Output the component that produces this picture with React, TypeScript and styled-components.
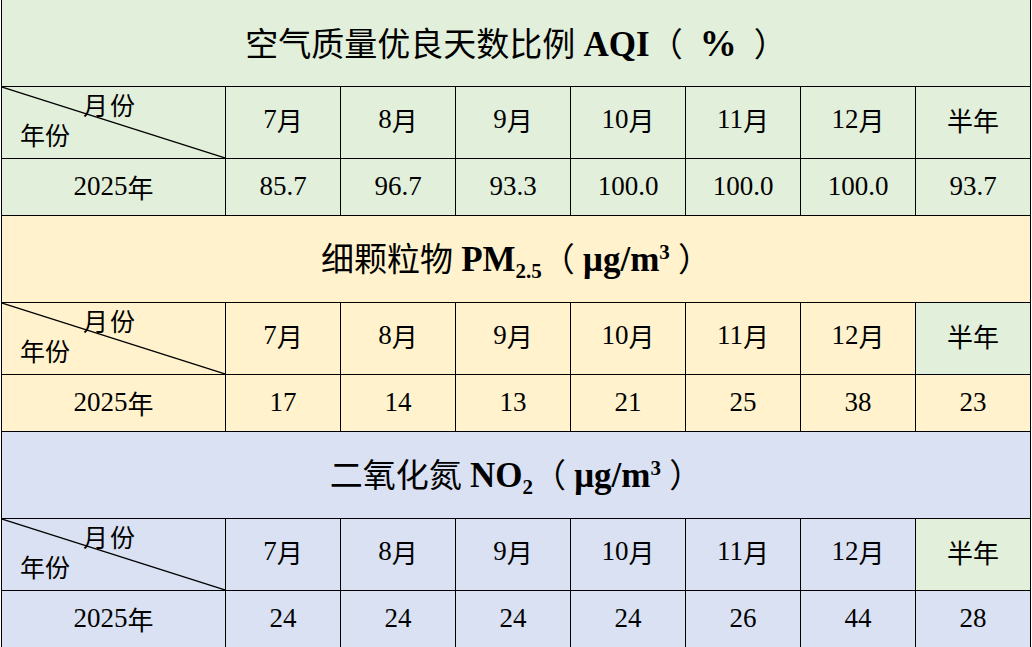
import styled, { createGlobalStyle } from "styled-components";

const GlobalStyle = createGlobalStyle`
  html, body {
    margin: 0;
    padding: 0;
    background: #ffffff;
  }
  body {
    font-family: "Liberation Serif", "Noto Sans CJK SC", serif;
    color: #000000;
  }
`;

const COLORS = {
  green: "#e2efda",
  yellow: "#fff2cc",
  blue: "#d9e1f2",
};

type Tone = keyof typeof COLORS;

const Sheet = styled.div`
  display: grid;
  grid-template-columns: 223px repeat(7, 114px);
  gap: 1px;
  padding: 1px;
  margin: -1px 0 0 1px;
  width: max-content;
  background: #000000;
`;

const TitleCell = styled.div<{ $tone: Tone }>`
  grid-column: 1 / -1;
  height: 86px;
  display: flex;
  align-items: center;
  justify-content: center;
  padding: 2px 0 0 0;
  box-sizing: border-box;
  background: ${(p) => COLORS[p.$tone]};
`;

const TitleText = styled.span`
  font-size: 33px;
  line-height: 40px;
  white-space: pre;
`;

const Latin = styled.span`
  font-family: "Liberation Serif", serif;
`;

const Bold = styled(Latin)<{ $gap?: number; $size?: number }>`
  font-weight: 700;
  font-size: ${(p) => p.$size ?? 35}px;
  margin: 0 ${(p) => p.$gap ?? 0}px;
`;

const Sub = styled.sub`
  font-family: "Liberation Serif", serif;
  font-size: 21px;
  font-weight: 700;
  vertical-align: -7px;
  line-height: 0;
`;

const Sup = styled.sup`
  font-family: "Liberation Serif", serif;
  font-size: 21px;
  font-weight: 700;
  vertical-align: 12px;
  line-height: 0;
`;

const Cell = styled.div<{ $tone: Tone; $tall?: boolean }>`
  height: ${(p) => (p.$tall ? "71px" : "56px")};
  display: flex;
  align-items: center;
  justify-content: center;
  background: ${(p) => COLORS[p.$tone]};
  font-size: 26px;
  padding-bottom: ${(p) => (p.$tall ? "6px" : "1px")};
  box-sizing: border-box;
`;

const Num = styled.span`
  font-family: "Liberation Serif", serif;
  font-size: 27px;
`;

const CornerCell = styled.div<{ $tone: Tone }>`
  position: relative;
  height: 71px;
  background: ${(p) => COLORS[p.$tone]};
  display: flex;
  flex-direction: column;
  justify-content: center;
  padding: 0 0 2px 18px;
  box-sizing: border-box;
  font-size: 25px;
  line-height: 30px;
`;

const CornerLine = styled.svg`
  position: absolute;
  inset: 0;
  width: 100%;
  height: 100%;
`;

const MonthLabel = styled.span`
  margin-left: 63px;
  letter-spacing: 2px;
  position: relative;
`;

const YearLabel = styled.span`
  position: relative;
`;

const months = ["7", "8", "9", "10", "11", "12"];

type Section = {
  tone: Tone;
  title: React.ReactNode;
  values: string[];
  halfTone: Tone;
};

const sections: Section[] = [
  {
    tone: "green",
    halfTone: "green",
    title: (
      <>
        空气质量优良天数比例 <Bold>AQI</Bold>（
        <Bold $gap={17} $size={37}>
          %
        </Bold>
        ）
      </>
    ),
    values: ["85.7", "96.7", "93.3", "100.0", "100.0", "100.0", "93.7"],
  },
  {
    tone: "yellow",
    halfTone: "green",
    title: (
      <>
        细颗粒物 <Bold>PM</Bold>
        <Sub>2.5</Sub>（<Latin> </Latin>
        <Bold>μg/m</Bold>
        <Sup>3</Sup>
        <Latin> </Latin>）
      </>
    ),
    values: ["17", "14", "13", "21", "25", "38", "23"],
  },
  {
    tone: "blue",
    halfTone: "green",
    title: (
      <>
        二氧化氮 <Bold>NO</Bold>
        <Sub>2</Sub>（<Latin> </Latin>
        <Bold>μg/m</Bold>
        <Sup>3</Sup>
        <Latin> </Latin>）
      </>
    ),
    values: ["24", "24", "24", "24", "26", "44", "28"],
  },
];

const SectionRows = ({ section }: { section: Section }) => (
  <>
    <TitleCell $tone={section.tone}>
      <TitleText>{section.title}</TitleText>
    </TitleCell>
    <CornerCell $tone={section.tone}>
      <CornerLine viewBox="0 0 100 100" preserveAspectRatio="none">
        <line
          x1="0"
          y1="0"
          x2="100"
          y2="100"
          stroke="#000"
          strokeWidth="1.2"
          vectorEffect="non-scaling-stroke"
        />
      </CornerLine>
      <MonthLabel>月份</MonthLabel>
      <YearLabel>年份</YearLabel>
    </CornerCell>
    {months.map((m) => (
      <Cell key={m} $tone={section.tone} $tall>
        <Num>{m}</Num>月
      </Cell>
    ))}
    <Cell $tone={section.halfTone} $tall>
      半年
    </Cell>
    <Cell $tone={section.tone}>
      <Num>2025</Num>年
    </Cell>
    {section.values.map((v, i) => (
      <Cell key={i} $tone={section.tone}>
        <Num>{v}</Num>
      </Cell>
    ))}
  </>
);

export default function App() {
  return (
    <>
      <GlobalStyle />
      <Sheet>
        {sections.map((s, i) => (
          <SectionRows key={i} section={s} />
        ))}
      </Sheet>
    </>
  );
}
